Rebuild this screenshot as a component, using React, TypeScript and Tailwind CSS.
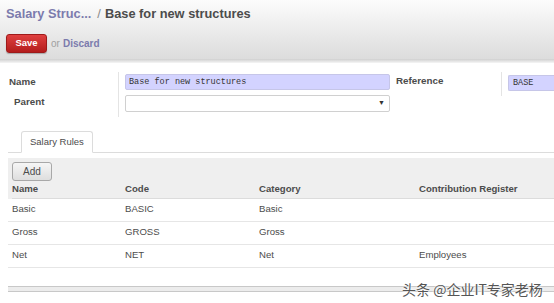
import React from "react";

interface Rule {
  name: string;
  code: string;
  category: string;
  register: string;
}

const rules: Rule[] = [
  { name: "Basic", code: "BASIC", category: "Basic", register: "" },
  { name: "Gross", code: "GROSS", category: "Gross", register: "" },
  { name: "Net", code: "NET", category: "Net", register: "Employees" },
];

export default function App() {
  return (
    <div className="relative w-[554px] h-[303px] overflow-hidden bg-white font-['Liberation_Sans',Arial,sans-serif] text-[#4c4c4c]">
      {/* header */}
      <div className="h-[59px] bg-gradient-to-b from-[#fcfcfc] to-[#dcdcdc] px-[6px] pt-[5px]">
        <h1 className="flex items-baseline text-[12.8px] font-bold leading-[18px]">
          <span className="text-[#7c7bad]">Salary Struc...</span>
          <span className="ml-[6px] font-normal text-[#8a8a8a]">/</span>
          <span className="ml-[4px] text-[#4c4c4c]">Base for new structures</span>
        </h1>
        <div className="mt-[11px] flex items-center">
          <button className="h-[19px] w-[41px] rounded-[3px] border border-[#9e1a1a] bg-gradient-to-b from-[#df3f3f] to-[#b41c1c] text-[9.5px] font-bold text-white shadow-[0_1px_1px_rgba(0,0,0,0.25)]">
            Save
          </button>
          <span className="ml-[4px] text-[10px] text-[#a0a0a0]">or</span>
          <span className="ml-[3px] text-[10px] font-bold text-[#7c7bad]">Discard</span>
        </div>
      </div>
      <div className="h-[4px] bg-gradient-to-b from-[#cfcfcf] to-[#f6f6f6]" />

      {/* form */}
      <div className="mt-[9px] flex text-[9.8px]">
        <div className="w-[119px] border-r border-[#e4e4e4] pb-[7px] pl-[9px] pt-[3px] font-bold">
          <div className="h-[20px]">Name</div>
          <div className="pl-[5px]">Parent</div>
        </div>
        <div className="w-[277px] px-[6px] pt-[2px]">
          <div className="flex h-[16px] items-center rounded-[2px] border border-[#c6c6e8] bg-[#d3d3ff] pl-[3px] font-['Liberation_Mono',monospace] text-[8.5px] text-[#333]">
            Base for new structures
          </div>
          <div className="mt-[5px] flex h-[17px] items-center justify-end rounded-[2px] border border-[#d0d0d0] bg-white pr-[4px] text-[7px] text-[#333]">
            ▼
          </div>
        </div>
        <div className="h-[24px] w-[106px] border-r border-[#e4e4e4] pt-[2px] font-bold">Reference</div>
        <div className="flex-1 pl-[6px] pt-[3px]">
          <div className="flex h-[16px] items-center rounded-l-[2px] border border-r-0 border-[#c6c6e8] bg-[#d3d3ff] pl-[4px] font-['Liberation_Mono',monospace] text-[8.5px] text-[#333]">
            BASE
          </div>
        </div>
      </div>

      {/* tabs */}
      <div className="mt-[14px] ml-[8px] flex border-b border-[#dcdcdc] pl-[13px]">
        <div className="-mb-px flex h-[22px] items-center rounded-t-[3px] border border-b-white border-[#dcdcdc] bg-white px-[8px] text-[9.5px] text-[#4c4c4c]">
          Salary Rules
        </div>
      </div>

      {/* rules table */}
      <div className="ml-[8px] mt-[5px] text-[9.6px]">
        <div className="bg-[#efefef] pl-[4px] pt-[4px]">
          <button className="h-[19px] w-[40px] rounded-[3px] border border-[#a8a8a8] bg-gradient-to-b from-[#f6f6f6] to-[#dedede] text-[10px] text-[#4c4c4c]">
            Add
          </button>
          <div className="flex h-[18px] items-center border-b border-[#dcdcdc] font-bold">
            <div className="w-[113px]">Name</div>
            <div className="w-[134px]">Code</div>
            <div className="w-[160px]">Category</div>
            <div>Contribution Register</div>
          </div>
        </div>
        {rules.map((r) => (
          <div key={r.name} className="flex h-[23px] items-center border-b border-[#e6e6e6] pl-[4px]">
            <div className="w-[113px]">{r.name}</div>
            <div className="w-[134px]">{r.code}</div>
            <div className="w-[160px]">{r.category}</div>
            <div>{r.register}</div>
          </div>
        ))}
        <div className="mt-[18px] h-[6px] border-y border-[#c8c8c8] bg-[#ececec]" />
      </div>

      {/* watermark */}
      <div className="absolute left-[402px] top-[279px] font-['Noto_Sans_CJK_SC',sans-serif] text-[14px] leading-[20px] text-[#555] [text-shadow:0_0_2px_#fff,0_0_2px_#fff]">
        头条 @企业IT专家老杨
      </div>
    </div>
  );
}
